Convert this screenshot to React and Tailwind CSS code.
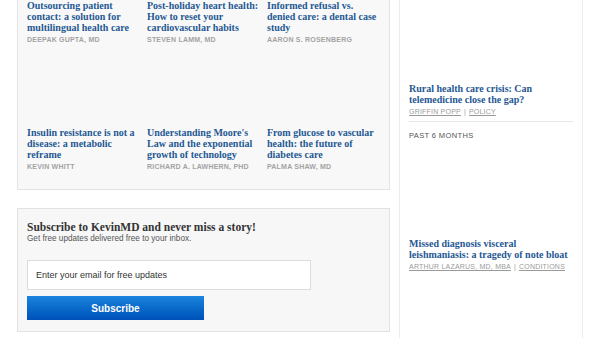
import React from 'react';

const serif = { fontFamily: '"Liberation Serif", "DejaVu Serif", serif' };

const gridPosts = [
  { title: 'Outsourcing patient contact: a solution for multilingual health care', author: 'Deepak Gupta, MD' },
  { title: 'Post-holiday heart health: How to reset your cardiovascular habits', author: 'Steven Lamm, MD' },
  { title: 'Informed refusal vs. denied care: a dental case study', author: 'Aaron S. Rosenberg' },
  { title: 'Insulin resistance is not a disease: a metabolic reframe', author: 'Kevin Whitt' },
  { title: "Understanding Moore's Law and the exponential growth of technology", author: 'Richard A. Lawhern, PhD' },
  { title: 'From glucose to vascular health: the future of diabetes care', author: 'Palma Shaw, MD' },
];

const PostCard = ({ post }) => (
  <div className="flex flex-col">
    {/* thumbnail never loaded, just empty space */}
    <div className="h-[80px] mb-[3px]" />
    <a href="#" className="text-[10px] leading-[11px] font-bold text-[#1f5893]" style={serif}>
      {post.title}
    </a>
    <div className="mt-[2px] text-[7px] leading-[9px] font-bold uppercase tracking-[0.03em] text-[#a3a3a3] font-['Liberation_Sans',Arial,sans-serif]">
      {post.author}
    </div>
  </div>
);

const SidePost = ({ title, author, tag }) => (
  <div>
    <a href="#" className="block text-[10px] leading-[11px] font-bold text-[#1f5893]" style={serif}>
      {title}
    </a>
    <div className="mt-[2px] whitespace-nowrap text-[7px] leading-[9px] uppercase tracking-[0.03em] text-[#9a9a9a] font-['Liberation_Sans',Arial,sans-serif]">
      <a href="#" className="underline">{author}</a>
      <span className="mx-[3px]">|</span>
      <a href="#" className="underline">{tag}</a>
    </div>
  </div>
);

const App = () => {
  return (
    <div className="flex h-[338px] w-[600px] overflow-hidden bg-white">
      {/* Main column */}
      <div className="ml-[17px] flex w-[373px] flex-col">
        <div className="-mt-[83px] border-x border-b border-[#e4e4e4] bg-[#f8f8f8] px-[9px] pb-[18px]">
          <div className="grid grid-cols-3 gap-x-[7px] gap-y-[0px]">
            {gridPosts.map((p) => (
              <PostCard key={p.title} post={p} />
            ))}
          </div>
        </div>

        {/* Newsletter */}
        <div className="mt-[18px] h-[124px] border border-[#e2e2e2] bg-[#f7f7f7] px-[9px] pt-[11px]">
          <h3 className="text-[11.5px] leading-[14px] font-bold text-[#333]" style={serif}>
            Subscribe to KevinMD and never miss a story!
          </h3>
          <p className="text-[8.2px] leading-[10px] text-[#555] font-['Liberation_Sans',Arial,sans-serif]">
            Get free updates delivered free to your inbox.
          </p>
          <input
            type="email"
            placeholder="Enter your email for free updates"
            className="mt-[16px] block h-[30px] w-[284px] border border-[#dcdcdc] bg-white px-[8px] text-[9px] text-[#333] placeholder:text-[#333] outline-none font-['Liberation_Sans',Arial,sans-serif]"
          />
          <button className="mt-[6px] block h-[24px] w-[177px] bg-gradient-to-b from-[#1b84dc] to-[#0050b9] text-[10px] font-bold text-white font-['Liberation_Sans',Arial,sans-serif]">
            Subscribe
          </button>
        </div>
      </div>

      {/* Sidebar */}
      <div className="ml-[9px] flex w-[184px] flex-col border-x border-[#ececec] bg-white px-[9px] pt-[83px]">
        <SidePost title="Rural health care crisis: Can telemedicine close the gap?" author="Griffin Popp" tag="Policy" />
        <div className="mt-[5px] border-t border-[#e6e6e6]" />
        <div className="mt-[9px] text-[7.5px] leading-[10px] uppercase tracking-[0.05em] text-[#555] font-['Liberation_Sans',Arial,sans-serif]">
          Past 6 months
        </div>
        <div className="mt-[97px]">
          <SidePost title="Missed diagnosis visceral leishmaniasis: a tragedy of note bloat" author="Arthur Lazarus, MD, MBA" tag="Conditions" />
        </div>
      </div>
    </div>
  );
};

export default App;
